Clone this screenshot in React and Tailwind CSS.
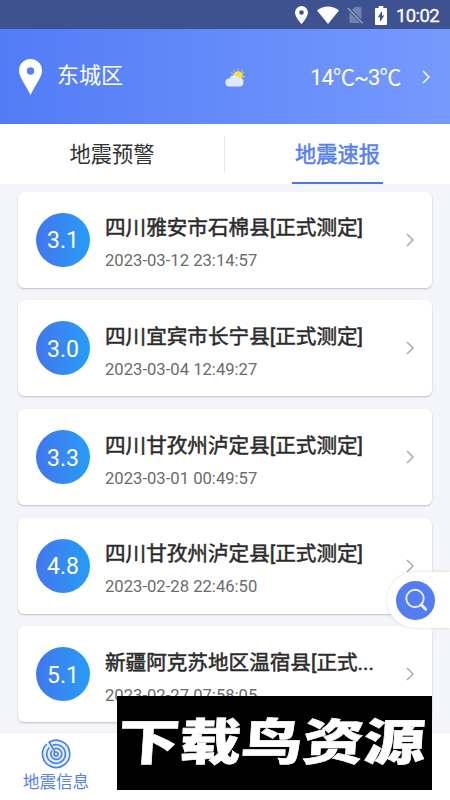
import React from 'react';

const quakes = [
  { magnitude: '3.1', title: '四川雅安市石棉县[正式测定]', time: '2023-03-12 23:14:57' },
  { magnitude: '3.0', title: '四川宜宾市长宁县[正式测定]', time: '2023-03-04 12:49:27' },
  { magnitude: '3.3', title: '四川甘孜州泸定县[正式测定]', time: '2023-03-01 00:49:57' },
  { magnitude: '4.8', title: '四川甘孜州泸定县[正式测定]', time: '2023-02-28 22:46:50' },
  { magnitude: '5.1', title: '新疆阿克苏地区温宿县[正式...', time: '2023-02-27 07:58:05' },
];

const Chevron = ({ className }) => (
  <svg className={className} viewBox="0 0 8 14" fill="none" stroke="currentColor" strokeWidth="1.5">
    <path d="M1 1l6 6-6 6" />
  </svg>
);

const StatusBar = () => (
  <div className="flex h-[29px] shrink-0 items-center bg-[#3d528e] pt-[1px] pl-[295px] text-white">
    <svg className="h-[18px] w-[13px]" viewBox="0 0 13 18" fill="currentColor">
      <path fillRule="evenodd" d="M6.5 0A6.5 6.5 0 0 0 0 6.5C0 11.3 6.5 18 6.5 18S13 11.3 13 6.5A6.5 6.5 0 0 0 6.5 0Zm0 4.2a2.3 2.3 0 1 1 0 4.6 2.3 2.3 0 0 1 0-4.6Z" />
    </svg>
    <svg className="ml-[9px] h-[18px] w-[22px]" viewBox="0 0 22 18" fill="currentColor">
      <path d="M0 4.5C6.2-.7 15.8-.7 22 4.5L11 18Z" />
    </svg>
    <svg className="ml-[8px] h-[18px] w-[17px] text-[#7482ae]" viewBox="0 0 17 18" fill="currentColor">
      <path d="M5 3.8 7.7 1H13q1.5 0 1.5 1.5v11ZM2.5 6 13.2 17H4q-1.5 0-1.5-1.5Z" />
      <path d="M.8 2 15.7 17.3" stroke="#98a2c3" strokeWidth="1.4" />
    </svg>
    <svg className="ml-[11px] h-[19px] w-[12px]" viewBox="0 0 12 19" fill="currentColor">
      <path fillRule="evenodd" d="M3.7 0h4.6v2H11q1 0 1 1v15q0 1-1 1H1q-1 0-1-1V3q0-1 1-1h2.7ZM7 5 2.8 11.3H5V16l4.2-6.5H7Z" />
    </svg>
    <span className="ml-[9px] pt-[2px] text-[18.5px] leading-none tracking-[-0.6px] [-webkit-text-stroke:0.3px]">10:02</span>
  </div>
);

const WeatherIcon = () => (
  <svg className="mt-[3px] ml-[1px] h-[20px] w-[22px]" viewBox="0 0 22 20">
    <circle cx="13" cy="8" r="4.8" fill="#f5df3f" />
    <g stroke="#d8d98a" strokeWidth="1">
      <path d="M13 .5v2M8.5 1.7l1 1.8M17.5 1.7l-1 1.8M19 4.5l-1.8 1M20 8.5h-2M19 12.5l-1.6-.9M6 4.5l1.8 1" />
    </g>
    <path d="M4.5 18.5a4 4 0 0 1-.2-8 5.4 5.4 0 0 1 9.8-.2 4.2 4.2 0 0 1 1.4 8.2Z" fill="#e0e8fc" />
  </svg>
);

const Header = () => (
  <header className="flex h-[94.5px] shrink-0 items-center bg-linear-to-r from-[#527cf6] to-[#7699fd] pl-[19px] text-white">
    <svg className="mt-[2px] h-[36px] w-[23px]" viewBox="0 0 23 36" fill="currentColor">
      <path fillRule="evenodd" d="M11.5 0A11.5 11.5 0 0 0 0 11.5C0 18 5 23 11.5 36 18 23 23 18 23 11.5A11.5 11.5 0 0 0 11.5 0Zm0 8.3a3.7 3.7 0 1 1 0 7.4 3.7 3.7 0 0 1 0-7.4Z" />
    </svg>
    <span className="ml-[15px] w-[167px] text-[22px] leading-none">东城区</span>
    <WeatherIcon />
    <span className="ml-[63px] w-[91px] pt-[4px] text-[22px] leading-none tracking-[-0.9px] whitespace-nowrap">14℃~3℃</span>
    <Chevron className="mt-[2px] ml-[21px] h-[14px] w-[8px]" />
  </header>
);

const Tabs = () => (
  <nav className="flex h-[60px] shrink-0 bg-white text-[21.2px] leading-none">
    <div className="flex w-[224px] items-center justify-center pt-[3px] text-[#333]">地震预警</div>
    <div className="mt-[12px] h-[36px] w-px bg-[#e8e8e8]" />
    <div className="flex flex-1 justify-center">
      <div className="flex w-[91px] items-center justify-center border-b-2 border-[#4a78ec] pt-[5px] text-[#5580ee] [-webkit-text-stroke:0.5px]">
        地震速报
      </div>
    </div>
  </nav>
);

const QuakeCard = ({ magnitude, title, time }) => (
  <div className="flex h-[96px] shrink-0 items-center rounded-[6px] bg-white px-[18px] shadow-[0_1px_2px_rgba(0,0,0,0.22)]">
    <div className="flex size-[54px] shrink-0 items-center justify-center rounded-full bg-linear-to-r from-[#4176ee] to-[#239cf6] pt-[2px] text-[23px] leading-none text-white">
      {magnitude}
    </div>
    <div className="ml-[15px] flex-1 pt-[5px] whitespace-nowrap">
      <div className="text-[20.6px] leading-[30px] text-[#2b2b2b] [-webkit-text-stroke:0.5px]">{title}</div>
      <div className="mt-[8px] text-[16.65px] leading-[20px] text-[#6b6b6b]">{time}</div>
    </div>
    <Chevron className="h-[14px] w-[8px] text-[#aaa]" />
  </div>
);

const TabBar = () => (
  <footer className="h-[68px] shrink-0 border-t border-[#ececf2] bg-white">
    <div className="flex w-[112px] flex-col items-center pt-[6px] text-[#5480e8]">
      <svg className="size-[30px]" viewBox="0 0 30 30" fill="none" stroke="#4a82e8" strokeWidth="1.7">
        <circle cx="15" cy="15" r="13.6" fill="#e8f1fd" stroke="none" />
        <path d="M5.8 5A13.6 13.6 0 1 0 8.2 3.2L14 13" />
        <path d="M8.4 8.5A9.3 9.3 0 1 0 11.5 6.4" />
        <path d="M11 11.5A5.5 5.5 0 1 0 13.3 9.8" />
        <circle cx="15" cy="15" r="2" />
      </svg>
      <span className="mt-[3px] text-[16.6px] leading-[22px]">地震信息</span>
    </div>
  </footer>
);

const SearchButton = () => (
  <div className="absolute top-[572px] right-0 flex h-[56px] w-[63px] items-center rounded-l-full bg-white pl-[9px] shadow-[0_0_3px_rgba(0,0,0,0.15)]">
    <div className="flex size-[39px] items-center justify-center rounded-full bg-[#547df2]">
      <svg className="size-[24px] text-[#edf2ff]" viewBox="0 0 24 24" fill="none" stroke="currentColor">
        <circle cx="11" cy="10.5" r="8.7" strokeWidth="1.9" />
        <path d="m17.2 16.8 4.5 4.5" strokeWidth="3" strokeLinecap="round" />
      </svg>
    </div>
  </div>
);

const Watermark = () => (
  <div className="absolute top-[696px] left-[117px] flex h-[94px] w-[315px] items-center justify-center overflow-hidden bg-black pr-[5px] pt-[2px]">
    <span className="scale-x-[1.24] -skew-x-3 text-[49.5px] leading-none font-black whitespace-nowrap text-white [-webkit-text-stroke:0.6px]">
      下载鸟资源
    </span>
  </div>
);

export default function App() {
  return (
    <div className="relative flex h-[800px] w-[450px] flex-col overflow-hidden bg-[#f4f4fb] font-[Roboto,'Noto_Sans_CJK_SC',sans-serif]">
      <StatusBar />
      <Header />
      <Tabs />
      <main className="flex min-h-0 flex-1 flex-col gap-[12.7px] overflow-hidden px-[18px] pt-[8.2px]">
        {quakes.map((quake) => (
          <QuakeCard key={quake.time} {...quake} />
        ))}
      </main>
      <TabBar />
      <SearchButton />
      <Watermark />
    </div>
  );
}
